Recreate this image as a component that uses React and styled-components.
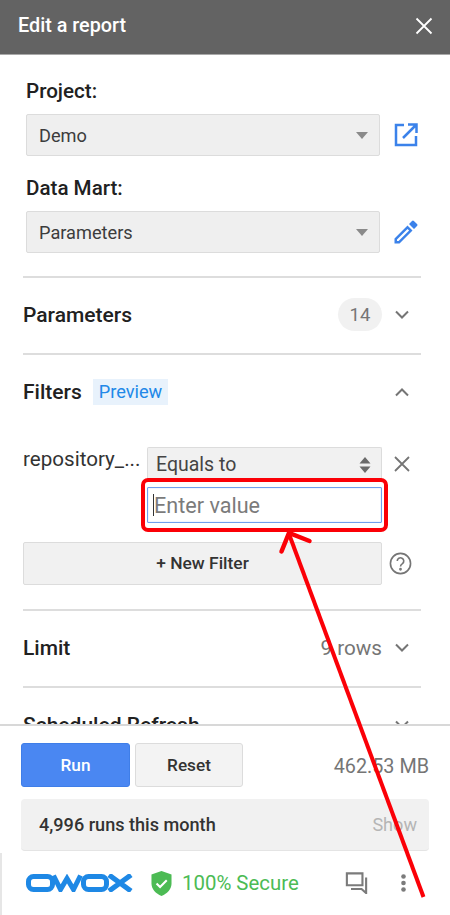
import React from "react";
import styled, { createGlobalStyle } from "styled-components";

const Global = createGlobalStyle`
  html, body { margin: 0; padding: 0; background: #fff; }
  * { box-sizing: border-box; }
  body { font-family: Roboto, "Liberation Sans", sans-serif; color: #212121; }
`;

const Page = styled.div`
  position: relative;
  width: 450px;
  height: 915px;
  display: flex;
  flex-direction: column;
  overflow: hidden;
`;

const Header = styled.header`
  height: 55px;
  flex: none;
  background: #636363;
  border-bottom: 1px solid #a9a9a9;
  display: flex;
  align-items: center;
  justify-content: space-between;
  padding: 0 17px 3px 18px;
  color: #fff;
`;
const Title = styled.h1`
  margin: 0;
  font-size: 19.8px;
  font-weight: 500;
`;
const Scroll = styled.main`
  flex: 1;
  min-height: 0;
  overflow: hidden;
  padding: 0 29px 0 23px;
`;
const Top = styled.section`
  padding: 24px 0 23px 3px;
`;
const Label = styled.div`
  font-size: 20.6px;
  font-weight: 500;
  line-height: 24px;
  margin-bottom: 11px;
`;
const FieldRow = styled.div`
  display: flex;
  align-items: center;
  gap: 14px;
  margin-bottom: 20px;
  &:last-child { margin-bottom: 0; }
`;
const Select = styled.div`
  width: 354px;
  height: 42px;
  background: #efefef;
  border: 1px solid #dcdcdc;
  border-radius: 2px;
  display: flex;
  align-items: center;
  justify-content: space-between;
  padding: 0 11px 0 12px;
  font-size: 18.2px;
  color: #3c3c3c;
`;
const Caret = styled.span`
  width: 0;
  height: 0;
  border-left: 6px solid transparent;
  border-right: 6px solid transparent;
  border-top: 7px solid #8a8a8a;
`;
const Section = styled.section`
  border-top: 2px solid #dddddd;
`;
const SectionHead = styled.div`
  height: 75px;
  display: flex;
  align-items: center;
  justify-content: space-between;
  padding: 0 11px 2px 0;
`;
const SectionTitle = styled.h2`
  margin: 0;
  font-size: 21px;
  font-weight: 500;
  display: flex;
  align-items: center;
  gap: 11px;
`;
const Right = styled.div`
  display: flex;
  align-items: center;
  gap: 12px;
  font-size: 20.7px;
  color: #757575;
`;
const Badge = styled.span`
  width: 44px;
  height: 33px;
  border-radius: 17px;
  background: #f1f1f1;
  display: flex;
  align-items: center;
  justify-content: center;
  font-size: 18.5px;
`;
const Preview = styled.span`
  background: #e8f2fc;
  color: #2188e8;
  font-size: 18.2px;
  font-weight: 400;
  height: 26px;
  padding: 0 6px;
  display: flex;
  align-items: center;
`;
const FilterBody = styled.div`
  padding-top: 17px;
  padding-bottom: 24px;
`;
const FilterRow = styled.div`
  display: grid;
  grid-template-columns: 124px 235px auto;
  column-gap: 0;
  align-items: start;
`;
const Field = styled.div`
  font-size: 20.6px;
  color: #333;
  line-height: 24px;
`;
const Stack = styled.div`
  display: flex;
  flex-direction: column;
  gap: 6px;
`;
const Operator = styled.div`
  height: 34px;
  background: #f1f1f1;
  border: 1px solid #dcdcdc;
  border-bottom: none;
  border-radius: 2px 2px 0 0;
  display: flex;
  align-items: center;
  justify-content: space-between;
  padding: 0 10px 0 8px;
  font-size: 19.5px;
  color: #444;
`;
const ValueWrap = styled.div`
  position: relative;
  &::before {
    content: "";
    position: absolute;
    left: 6px;
    top: 7px;
    width: 1px;
    height: 22px;
    background: #333;
  }
`;
const Value = styled.input`
  width: 100%;
  height: 36px;
  border: 1px solid #6f9fee;
  box-shadow: inset 0 0 1px #6f9fee;
  border-radius: 1px;
  padding: 0 6px;
  outline: none;
  font: 400 21.6px Roboto, sans-serif;
  background: #fff;
  &::placeholder { color: #7b7b7b; opacity: 1; }
`;
const Remove = styled.div`
  padding: 9px 0 0 12px;
  color: #757575;
`;
const AddRow = styled.div`
  display: flex;
  align-items: center;
  gap: 7px;
  margin-top: 19px;
`;
const AddButton = styled.button`
  width: 359px;
  height: 43px;
  background: #f1f1f1;
  border: 1px solid #dcdcdc;
  border-radius: 2px;
  padding-bottom: 3px;
  font: 500 17.4px Roboto, sans-serif;
  color: #333;
`;
const Footer = styled.footer`
  flex: none;
  height: 191px;
  border-top: 2px solid #d8d8d8;
  background: #fff;
  padding: 17px 21px 0;
  position: relative;
`;
const Actions = styled.div`
  display: flex;
  align-items: center;
  gap: 5px;
`;
const Btn = styled.button`
  width: ${(p) => (p.$primary ? "109px" : "108px")};
  height: 44px;
  border-radius: 3px;
  border: 1px solid ${(p) => (p.$primary ? "#3f7ee8" : "#dcdcdc")};
  background: ${(p) => (p.$primary ? "#4a87f2" : "#f3f3f3")};
  color: ${(p) => (p.$primary ? "#fff" : "#333")};
  padding-bottom: 2px;
  font: 500 17.2px Roboto, sans-serif;
`;
const Size = styled.div`
  margin-left: auto;
  margin-top: 3px;
  font-size: 19.8px;
  color: #757575;
`;
const Stats = styled.div`
  margin-top: 12px;
  height: 52px;
  background: #f1f1f1;
  border-bottom: 1px solid #e4e4e4;
  border-radius: 4px;
  display: flex;
  align-items: center;
  justify-content: space-between;
  padding: 0 12px 0 18px;
  font-size: 18.1px;
  font-weight: 500;
  color: #333;
`;
const Show = styled.span`
  font-weight: 400;
  color: #b5b5b5;
`;
const Bottom = styled.div`
  display: flex;
  align-items: center;
  margin-top: 14px;
  padding-left: 5px;
  height: 36px;
`;
const Secure = styled.div`
  display: flex;
  align-items: center;
  gap: 10px;
  margin-left: 18px;
  color: #4cbb54;
  font-size: 20.4px;
`;
const Tools = styled.div`
  margin-left: auto;
  margin-right: 23px;
  display: flex;
  align-items: center;
  gap: 33px;
  color: #7b7b7b;
`;
const SideLine = styled.div`
  position: absolute;
  left: 0;
  bottom: 0;
  width: 2px;
  height: 62px;
  background: #e6e6e6;
`;
const Overlay = styled.svg`
  position: absolute;
  inset: 0;
  pointer-events: none;
`;

const Chevron = ({ up }) => (
  <svg width="16" height="10" viewBox="0 0 16 10" fill="none" stroke="#757575" strokeWidth="2">
    <path d={up ? "M2 8.5 8 2.5l6 6" : "M2 1.5l6 6 6-6"} />
  </svg>
);

const Owox = () => (
  <svg width="107" height="18" viewBox="0 0 107 18" fill="none" stroke="#1e88e5" strokeWidth="5" aria-label="OWOX">
    <rect x="2.500" y="2.500" width="24" height="13" rx="5" />
    <path d="M27.500 1.500 34.500 15.500 41 4.500l6.500 11 7-14" />
    <rect x="57.500" y="2.500" width="23" height="13" rx="5" />
    <path d="M83 1 105 17M105 1 83 17" strokeWidth="5.200" />
  </svg>
);

export default function App() {
  return (
    <Page>
      <Global />
      <Header>
        <Title>Edit a report</Title>
        <svg width="18" height="18" viewBox="0 0 18 18" stroke="#fff" strokeWidth="1.8">
          <path d="M1.500 1.500l15 15M16.500 1.500l-15 15" />
        </svg>
      </Header>
      <Scroll>
        <Top>
          <Label>Project:</Label>
          <FieldRow>
            <Select>Demo<Caret /></Select>
            <svg width="24" height="24" viewBox="0 0 24 24" fill="none" stroke="#3b82ea" strokeWidth="2.500">
              <path d="M10 2H2v20h20v-9" />
              <path d="M9 15 22 2M14 1.500h8.500V10" />
            </svg>
          </FieldRow>
          <Label>Data Mart:</Label>
          <FieldRow>
            <Select>Parameters<Caret /></Select>
            <svg width="24" height="24" viewBox="0 0 24 24" fill="#3b82ea">
              <path d="M0.500 18.500V23.500H5.500L18.500 10.500 13.500 5.500zM3 21v-1.600L13.500 8.900l1.600 1.600L4.600 21zM20 9l3-3a1.300 1.300 0 0 0 0-1.900L19.900 1a1.300 1.300 0 0 0-1.900 0l-3 3z" />
            </svg>
          </FieldRow>
        </Top>
        <Section>
          <SectionHead>
            <SectionTitle>Parameters</SectionTitle>
            <Right><Badge>14</Badge><Chevron /></Right>
          </SectionHead>
        </Section>
        <Section>
          <SectionHead>
            <SectionTitle>Filters<Preview>Preview</Preview></SectionTitle>
            <Right><Chevron up /></Right>
          </SectionHead>
          <FilterBody>
            <FilterRow>
              <Field>repository_...</Field>
              <Stack>
                <Operator>
                  Equals to
                  <svg width="12" height="18" viewBox="0 0 12 18" fill="#6b6b6b">
                    <path d="M6 1l5.500 6.500H.5zM6 17l5.500-6.500H.5z" />
                  </svg>
                </Operator>
                <ValueWrap><Value placeholder="Enter value" /></ValueWrap>
              </Stack>
              <Remove>
                <svg width="16" height="16" viewBox="0 0 16 16" stroke="#757575" strokeWidth="1.8">
                  <path d="M1 1l14 14M15 1L1 15" />
                </svg>
              </Remove>
            </FilterRow>
            <AddRow>
              <AddButton>+ New Filter</AddButton>
              <svg width="23" height="23" viewBox="0 0 24 24" fill="none" stroke="#757575" strokeWidth="1.7">
                <circle cx="12" cy="12" r="10.500" />
                <path d="M8.600 9.400a3.400 3.400 0 1 1 5.400 2.800c-1.300.9-2 1.500-2 3" />
                <circle cx="12" cy="18" r=".6" fill="#757575" />
              </svg>
            </AddRow>
          </FilterBody>
        </Section>
        <Section>
          <SectionHead>
            <SectionTitle>Limit</SectionTitle>
            <Right>9 rows<Chevron /></Right>
          </SectionHead>
        </Section>
        <Section>
          <SectionHead>
            <SectionTitle>Scheduled Refresh</SectionTitle>
            <Right><Chevron /></Right>
          </SectionHead>
        </Section>
      </Scroll>
      <Footer>
        <Actions>
          <Btn $primary>Run</Btn>
          <Btn>Reset</Btn>
          <Size>462.53 MB</Size>
        </Actions>
        <Stats>4,996 runs this month<Show>Show</Show></Stats>
        <Bottom>
          <Owox />
          <Secure>
            <svg width="21" height="25" viewBox="0 0 22 26">
              <path d="M11 0l10.500 3.600v9.400c0 6-4.400 10.600-10.500 13C4.900 23.600.5 19 .5 13V3.600z" fill="#4cbb54" />
              <path d="M5.800 13l3.700 3.600 7-7" fill="none" stroke="#fff" strokeWidth="2.200" />
            </svg>
            100% Secure
          </Secure>
          <Tools>
            <svg width="23" height="22" viewBox="0 0 24 24" fill="none" stroke="#7b7b7b" strokeWidth="2.300">
              <path d="M1.500 1.500h17v13H1.500z" />
              <path d="M22.500 6v17l-5-4.500H6" />
            </svg>
            <svg width="5" height="18" viewBox="0 0 5 18" fill="#7b7b7b">
              <circle cx="2.500" cy="2.500" r="2.300" />
              <circle cx="2.500" cy="9" r="2.300" />
              <circle cx="2.500" cy="15.500" r="2.300" />
            </svg>
          </Tools>
        </Bottom>
        <SideLine />
      </Footer>
      <Overlay width="450" height="915" viewBox="0 0 450 915" fill="none" stroke="#fb0007">
        <rect x="143" y="480" width="243" height="50" rx="5" strokeWidth="4" />
        <path d="M423.500 897 289 534" strokeWidth="4" />
        <path d="M281.500 551.500 289 533l20.500 8" strokeWidth="4.500" strokeLinecap="round" />
      </Overlay>
    </Page>
  );
}
